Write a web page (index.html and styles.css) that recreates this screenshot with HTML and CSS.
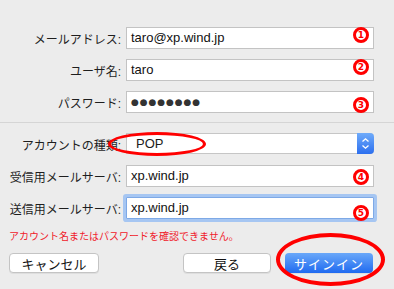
FILE: index.html
```html
<!DOCTYPE html>
<html lang="ja">
<head>
    <meta charset="UTF-8">
    <title>サインイン</title>
    <link rel="stylesheet" href="styles.css">
</head>
<body>
    <div class="sheet">
        <div class="form-grid">
            <label class="label">メールアドレス:</label>
            <div class="field">taro@xp.wind.jp<span class="mark mark-1">1</span></div>

            <label class="label">ユーザ名:</label>
            <div class="field">taro<span class="mark mark-2">2</span></div>

            <label class="label">パスワード:</label>
            <div class="field"><span class="dots">●●●●●●●●</span><span class="mark mark-3">3</span></div>
        </div>

        <hr class="divider">

        <div class="form-grid">
            <label class="label">アカウントの種類:</label>
            <div class="select">
                <span class="select-value">POP</span>
                <span class="stepper">
                    <svg width="9" height="13" viewBox="0 0 9 13">
                        <path d="M1.5 4.5 L4.5 1.8 L7.5 4.5 M1.5 8.5 L4.5 11.2 L7.5 8.5" fill="none" stroke="#fff" stroke-width="1.3"/>
                    </svg>
                </span>
                <span class="ring ring-pop"></span>
            </div>

            <label class="label">受信用メールサーバ:</label>
            <div class="field">xp.wind.jp<span class="mark mark-4">4</span></div>

            <label class="label">送信用メールサーバ:</label>
            <div class="field field-focus">xp.wind.jp<span class="mark mark-5">5</span></div>
        </div>

        <p class="error">アカウント名またはパスワードを確認できません。</p>

        <div class="buttons">
            <button class="btn btn-cancel">キャンセル</button>
            <button class="btn btn-back">戻る</button>
            <button class="btn btn-primary">サインイン<span class="ring ring-signin"></span></button>
        </div>
    </div>
</body>
</html>
```

FILE: styles.css
```css
* {
    margin: 0;
    padding: 0;
    box-sizing: border-box;
}

body {
    font-family: 'Liberation Sans', 'Noto Sans CJK JP', sans-serif;
    background: #ececec;
    color: #1c1c1c;
    width: 394px;
    height: 289px;
    overflow: hidden;
}

.sheet {
    padding-top: 27px;
}

.form-grid {
    display: grid;
    grid-template-columns: 121px 248px;
    grid-auto-rows: 22px;
    column-gap: 5px;
    row-gap: 10px;
    align-items: center;
}

.label {
    font-size: 12px;
    text-align: right;
    white-space: nowrap;
    color: #1e1e1e;
}

.field {
    position: relative;
    height: 22px;
    background: #fff;
    border: 1px solid #c3c3c3;
    font-size: 13px;
    line-height: 20px;
    padding-left: 4px;
    color: #111;
}

.field-focus {
    border-color: #7ea9e6;
    box-shadow: 0 0 0 3px #a6c6f2;
    border-radius: 1px;
}

.dots {
    font-family: 'DejaVu Sans', sans-serif;
    font-size: 9px;
    letter-spacing: 0.9px;
    color: #333;
    position: relative;
    top: -1px;
}

.mark {
    position: absolute;
    right: 4px;
    width: 16px;
    height: 16px;
    border: 3px solid #f00;
    border-radius: 50%;
    background: #fff;
    color: #f00;
    font-family: 'DejaVu Sans', sans-serif;
    font-weight: bold;
    font-size: 9px;
    line-height: 10px;
    text-align: center;
}

.mark-1 { top: -1px; }
.mark-2 { top: -1px; }
.mark-3 { top: 5px; }
.mark-4 { top: 3px; }
.mark-5 { top: 7px; }

.divider {
    border: none;
    border-top: 1px solid #d5d5d5;
    margin: 9px 0 10px;
}

.select {
    position: relative;
    height: 21px;
    align-self: start;
    display: flex;
    background: #fff;
    border: 1px solid #c6c6c6;
    border-right: none;
    border-radius: 0 4px 4px 0;
    font-size: 13px;
}

.select-value {
    flex: 1;
    padding-left: 9px;
    line-height: 19px;
}

.stepper {
    width: 17px;
    margin: -1px 0;
    display: flex;
    align-items: center;
    justify-content: center;
    background: linear-gradient(#6fabfa, #2c6fef);
    border-radius: 0 4px 4px 0;
}

.ring {
    position: absolute;
    border: 3px solid #f00;
    border-radius: 50%;
    pointer-events: none;
}

.ring-pop {
    left: -19px;
    top: -2px;
    width: 98px;
    height: 24px;
}

.error {
    margin: 11px 0 0 9px;
    font-size: 10px;
    line-height: 14px;
    color: #f0202a;
}

.buttons {
    display: flex;
    align-items: center;
    margin-top: 9px;
    padding: 0 21px 0 9px;
}

.btn {
    font-family: inherit;
    font-size: 13px;
    height: 20px;
    border-radius: 4px;
    border: 1px solid #c4c4c4;
    background: #fff;
    color: #111;
    box-shadow: 0 1px 0 rgba(0,0,0,0.06);
}

.btn-cancel {
    width: 90px;
}

.btn-back {
    width: 88px;
    margin-left: auto;
}

.btn-primary {
    position: relative;
    width: 88px;
    margin-left: 14px;
    border: none;
    color: #fff;
    letter-spacing: 1px;
    background: linear-gradient(#6aa8f9, #1f6af0);
}

.ring-signin {
    left: -9px;
    top: -20px;
    width: 109px;
    height: 53px;
    border-width: 4px;
}
```
